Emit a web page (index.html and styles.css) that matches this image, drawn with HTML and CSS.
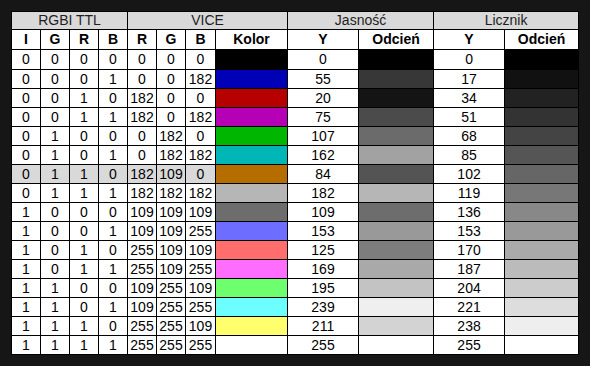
FILE: index.html
```html
<!DOCTYPE html>
<html lang="pl">
<head>
<meta charset="utf-8">
<title>RGBI</title>
<link rel="stylesheet" href="styles.css">
</head>
<body>
<table class="pal">
<colgroup>
<col class="c29"><col class="c29"><col class="c29"><col class="c29">
<col class="c29"><col class="c29"><col class="c30">
<col class="c72"><col class="c71"><col class="c75"><col class="c71"><col class="c74">
</colgroup>
<thead>
<tr class="grp">
<th colspan="4">RGBI TTL</th>
<th colspan="4">VICE</th>
<th colspan="2">Jasność</th>
<th colspan="2">Licznik</th>
</tr>
<tr class="sub">
<th>I</th><th>G</th><th>R</th><th>B</th><th>R</th><th>G</th><th>B</th><th>Kolor</th><th>Y</th><th>Odcień</th><th>Y</th><th>Odcień</th>
</tr>
</thead>
<tbody>
<tr><td>0</td><td>0</td><td>0</td><td>0</td><td>0</td><td>0</td><td>0</td><td class="sw" style="background:rgb(0,0,0)"></td><td>0</td><td class="sw" style="background:rgb(0,0,0)"></td><td>0</td><td class="sw" style="background:rgb(0,0,0)"></td></tr>
<tr><td>0</td><td>0</td><td>0</td><td>1</td><td>0</td><td>0</td><td>182</td><td class="sw" style="background:rgb(0,0,182)"></td><td>55</td><td class="sw" style="background:rgb(55,55,55)"></td><td>17</td><td class="sw" style="background:rgb(17,17,17)"></td></tr>
<tr><td>0</td><td>0</td><td>1</td><td>0</td><td>182</td><td>0</td><td>0</td><td class="sw" style="background:rgb(182,0,0)"></td><td>20</td><td class="sw" style="background:rgb(20,20,20)"></td><td>34</td><td class="sw" style="background:rgb(34,34,34)"></td></tr>
<tr><td>0</td><td>0</td><td>1</td><td>1</td><td>182</td><td>0</td><td>182</td><td class="sw" style="background:rgb(182,0,182)"></td><td>75</td><td class="sw" style="background:rgb(75,75,75)"></td><td>51</td><td class="sw" style="background:rgb(51,51,51)"></td></tr>
<tr><td>0</td><td>1</td><td>0</td><td>0</td><td>0</td><td>182</td><td>0</td><td class="sw" style="background:rgb(0,182,0)"></td><td>107</td><td class="sw" style="background:rgb(107,107,107)"></td><td>68</td><td class="sw" style="background:rgb(68,68,68)"></td></tr>
<tr><td>0</td><td>1</td><td>0</td><td>1</td><td>0</td><td>182</td><td>182</td><td class="sw" style="background:rgb(0,182,182)"></td><td>162</td><td class="sw" style="background:rgb(162,162,162)"></td><td>85</td><td class="sw" style="background:rgb(85,85,85)"></td></tr>
<tr class="hl"><td>0</td><td>1</td><td>1</td><td>0</td><td>182</td><td>109</td><td>0</td><td class="sw" style="background:rgb(182,109,0)"></td><td>84</td><td class="sw" style="background:rgb(84,84,84)"></td><td>102</td><td class="sw" style="background:rgb(102,102,102)"></td></tr>
<tr><td>0</td><td>1</td><td>1</td><td>1</td><td>182</td><td>182</td><td>182</td><td class="sw" style="background:rgb(182,182,182)"></td><td>182</td><td class="sw" style="background:rgb(182,182,182)"></td><td>119</td><td class="sw" style="background:rgb(119,119,119)"></td></tr>
<tr><td>1</td><td>0</td><td>0</td><td>0</td><td>109</td><td>109</td><td>109</td><td class="sw" style="background:rgb(109,109,109)"></td><td>109</td><td class="sw" style="background:rgb(109,109,109)"></td><td>136</td><td class="sw" style="background:rgb(136,136,136)"></td></tr>
<tr><td>1</td><td>0</td><td>0</td><td>1</td><td>109</td><td>109</td><td>255</td><td class="sw" style="background:rgb(109,109,255)"></td><td>153</td><td class="sw" style="background:rgb(153,153,153)"></td><td>153</td><td class="sw" style="background:rgb(153,153,153)"></td></tr>
<tr><td>1</td><td>0</td><td>1</td><td>0</td><td>255</td><td>109</td><td>109</td><td class="sw" style="background:rgb(255,109,109)"></td><td>125</td><td class="sw" style="background:rgb(125,125,125)"></td><td>170</td><td class="sw" style="background:rgb(170,170,170)"></td></tr>
<tr><td>1</td><td>0</td><td>1</td><td>1</td><td>255</td><td>109</td><td>255</td><td class="sw" style="background:rgb(255,109,255)"></td><td>169</td><td class="sw" style="background:rgb(169,169,169)"></td><td>187</td><td class="sw" style="background:rgb(187,187,187)"></td></tr>
<tr><td>1</td><td>1</td><td>0</td><td>0</td><td>109</td><td>255</td><td>109</td><td class="sw" style="background:rgb(109,255,109)"></td><td>195</td><td class="sw" style="background:rgb(195,195,195)"></td><td>204</td><td class="sw" style="background:rgb(204,204,204)"></td></tr>
<tr><td>1</td><td>1</td><td>0</td><td>1</td><td>109</td><td>255</td><td>255</td><td class="sw" style="background:rgb(109,255,255)"></td><td>239</td><td class="sw" style="background:rgb(239,239,239)"></td><td>221</td><td class="sw" style="background:rgb(221,221,221)"></td></tr>
<tr><td>1</td><td>1</td><td>1</td><td>0</td><td>255</td><td>255</td><td>109</td><td class="sw" style="background:rgb(255,255,109)"></td><td>211</td><td class="sw" style="background:rgb(211,211,211)"></td><td>238</td><td class="sw" style="background:rgb(238,238,238)"></td></tr>
<tr><td>1</td><td>1</td><td>1</td><td>1</td><td>255</td><td>255</td><td>255</td><td class="sw" style="background:rgb(255,255,255)"></td><td>255</td><td class="sw" style="background:rgb(255,255,255)"></td><td>255</td><td class="sw" style="background:rgb(255,255,255)"></td></tr>
</tbody>
</table>
</body>
</html>
```

FILE: styles.css
```css
html, body {
  margin: 0;
  padding: 0;
  background: #161616;
}

body {
  padding: 11px;
  font-family: "Liberation Sans", Arial, sans-serif;
  font-size: 14px;
  color: #000;
}

.pal {
  border-collapse: separate;
  border-spacing: 0;
  table-layout: fixed;
  width: 568px;
  border-left: 1px solid #000;
  border-top: 1px solid #000;
  background: #fff;
}

.c29 { width: 29px; }
.c30 { width: 30px; }
.c71 { width: 71px; }
.c72 { width: 72px; }
.c74 { width: 74px; }
.c75 { width: 75px; }

.pal th,
.pal td {
  box-sizing: border-box;
  padding: 0;
  border-right: 1px solid #000;
  border-bottom: 1px solid #000;
  text-align: center;
  vertical-align: middle;
  white-space: nowrap;
  overflow: hidden;
}

.grp th {
  height: 18px;
  line-height: 17px;
  background: #d9d9d9;
  font-weight: normal;
  color: #1e1e1e;
}

.sub th {
  height: 20px;
  line-height: 19px;
  font-weight: bold;
  background: #fff;
}

.pal td {
  height: 19px;
  line-height: 18px;
}

.pal tbody tr:first-child td {
  height: 20px;
  line-height: 19px;
}

.hl td:nth-child(-n+7) {
  background: #d9d9d9;
}
```
